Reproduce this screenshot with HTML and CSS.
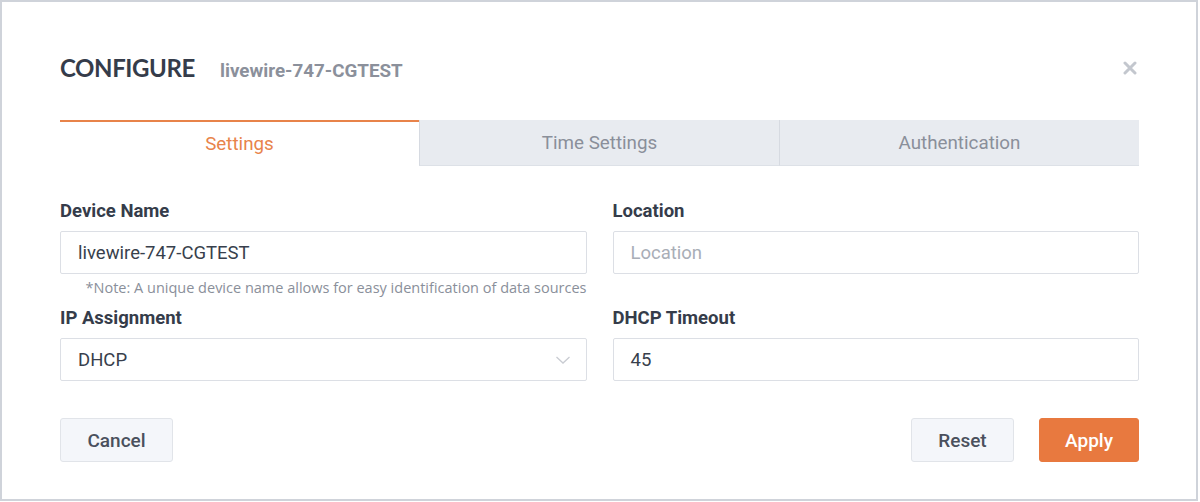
FILE: index.html
```html
<!DOCTYPE html>
<html>
<head>
<meta charset="utf-8">
<link rel="stylesheet" href="styles.css">
</head>
<body>
<div class="frame">
  <div class="header">
    <h1 class="title">CONFIGURE</h1>
    <span class="subtitle">livewire-747-CGTEST</span>
    <span class="close">
      <svg width="14" height="14" viewBox="0 0 14 14"><path d="M2 2 L12 12 M12 2 L2 12" stroke="#c3c7ce" stroke-width="3" stroke-linecap="round"/></svg>
    </span>
  </div>
  <div class="tabs">
    <div class="tab active">Settings</div>
    <div class="tab">Time Settings</div>
    <div class="tab">Authentication</div>
  </div>
  <div class="grid">
    <div class="field">
      <label class="label">Device Name</label>
      <div class="input">livewire-747-CGTEST</div>
      <div class="note">*Note: A unique device name allows for easy identification of data sources</div>
    </div>
    <div class="field">
      <label class="label">Location</label>
      <div class="input placeholder">Location</div>
    </div>
    <div class="field">
      <label class="label">IP Assignment</label>
      <div class="input select">DHCP
        <svg class="chev" width="16" height="10" viewBox="0 0 16 10"><path d="M1.5 2 L8 8 L14.5 2" fill="none" stroke="#c9ccd2" stroke-width="1.3"/></svg>
      </div>
    </div>
    <div class="field">
      <label class="label">DHCP Timeout</label>
      <div class="input">45</div>
    </div>
  </div>
  <div class="actions">
    <button class="btn cancel">Cancel</button>
    <div class="spacer"></div>
    <button class="btn reset">Reset</button>
    <button class="btn primary">Apply</button>
  </div>
</div>
</body>
</html>
```
FILE: styles.css
```css
* { box-sizing: border-box; }
html, body { margin: 0; padding: 0; background: #ffffff; }
body { font-family: Roboto, "Liberation Sans", sans-serif; }

.frame {
  width: 1198px;
  height: 501px;
  border: 2px solid #cfd3da;
  padding: 51px 57px 0 58px;
  background: #fff;
}

.header {
  display: flex;
  align-items: baseline;
  height: 30px;
}
.title {
  margin: 0;
  font-family: Lato, sans-serif;
  font-weight: 700;
  font-size: 24px;
  line-height: 30px;
  color: #353c4a;
  letter-spacing: -0.4px;
}
.subtitle {
  margin-left: 25px;
  font-family: Roboto, sans-serif;
  font-weight: 700;
  font-size: 18.8px;
  color: #8b909b;
}
.close {
  margin-left: auto;
  margin-right: 2px;
  align-self: center;
  display: flex;
}

.tabs {
  margin-top: 37px;
  display: flex;
  height: 46px;
}
.tab {
  flex: 1;
  display: flex;
  align-items: center;
  justify-content: center;
  background: #e8ebf0;
  border-bottom: 1px solid #dde1e7;
  font-size: 18.8px;
  color: #8a8f9a;
}
.tab + .tab { border-left: 1px solid #d6dae1; }
.tab.active {
  background: #fff;
  border-top: 2px solid #e8834a;
  border-bottom: none;
  color: #e8834a;
}

.grid {
  margin-top: 34px;
  display: grid;
  grid-template-columns: 1fr 1fr;
  column-gap: 26px;
  row-gap: 11px;
}
.field { display: flex; flex-direction: column; }
.label {
  font-weight: 700;
  font-size: 18.5px;
  line-height: 22px;
  color: #353c4a;
  margin-bottom: 9px;
}
.input {
  height: 43px;
  border: 1px solid #dcdfe5;
  border-radius: 2px;
  padding: 0 17px;
  display: flex;
  align-items: center;
  font-size: 18.5px;
  color: #383f4c;
}
.input.placeholder { color: #a9aeb7; }
.input.select { justify-content: space-between; padding-right: 15px; }
.chev { display: block; }
.note {
  align-self: flex-end;
  margin-top: 6px;
  font-family: "Open Sans", sans-serif;
  font-size: 14.5px;
  line-height: 16px;
  color: #8a8f9a;
}

.actions {
  margin-top: 37px;
  display: flex;
  align-items: center;
}
.spacer { flex: 1; }
.btn {
  height: 44px;
  border: 1px solid #e1e4e9;
  border-radius: 3px;
  background: #f4f6fa;
  font-family: Roboto, sans-serif;
  font-weight: 500;
  font-size: 19px;
  color: #4a505d;
  padding: 0;
}
.btn.cancel { width: 113px; }
.btn.reset { width: 103px; margin-right: 25px; }
.btn.primary {
  width: 100px;
  background: #e8793f;
  border-color: #e8793f;
  color: #fff;
}
```
